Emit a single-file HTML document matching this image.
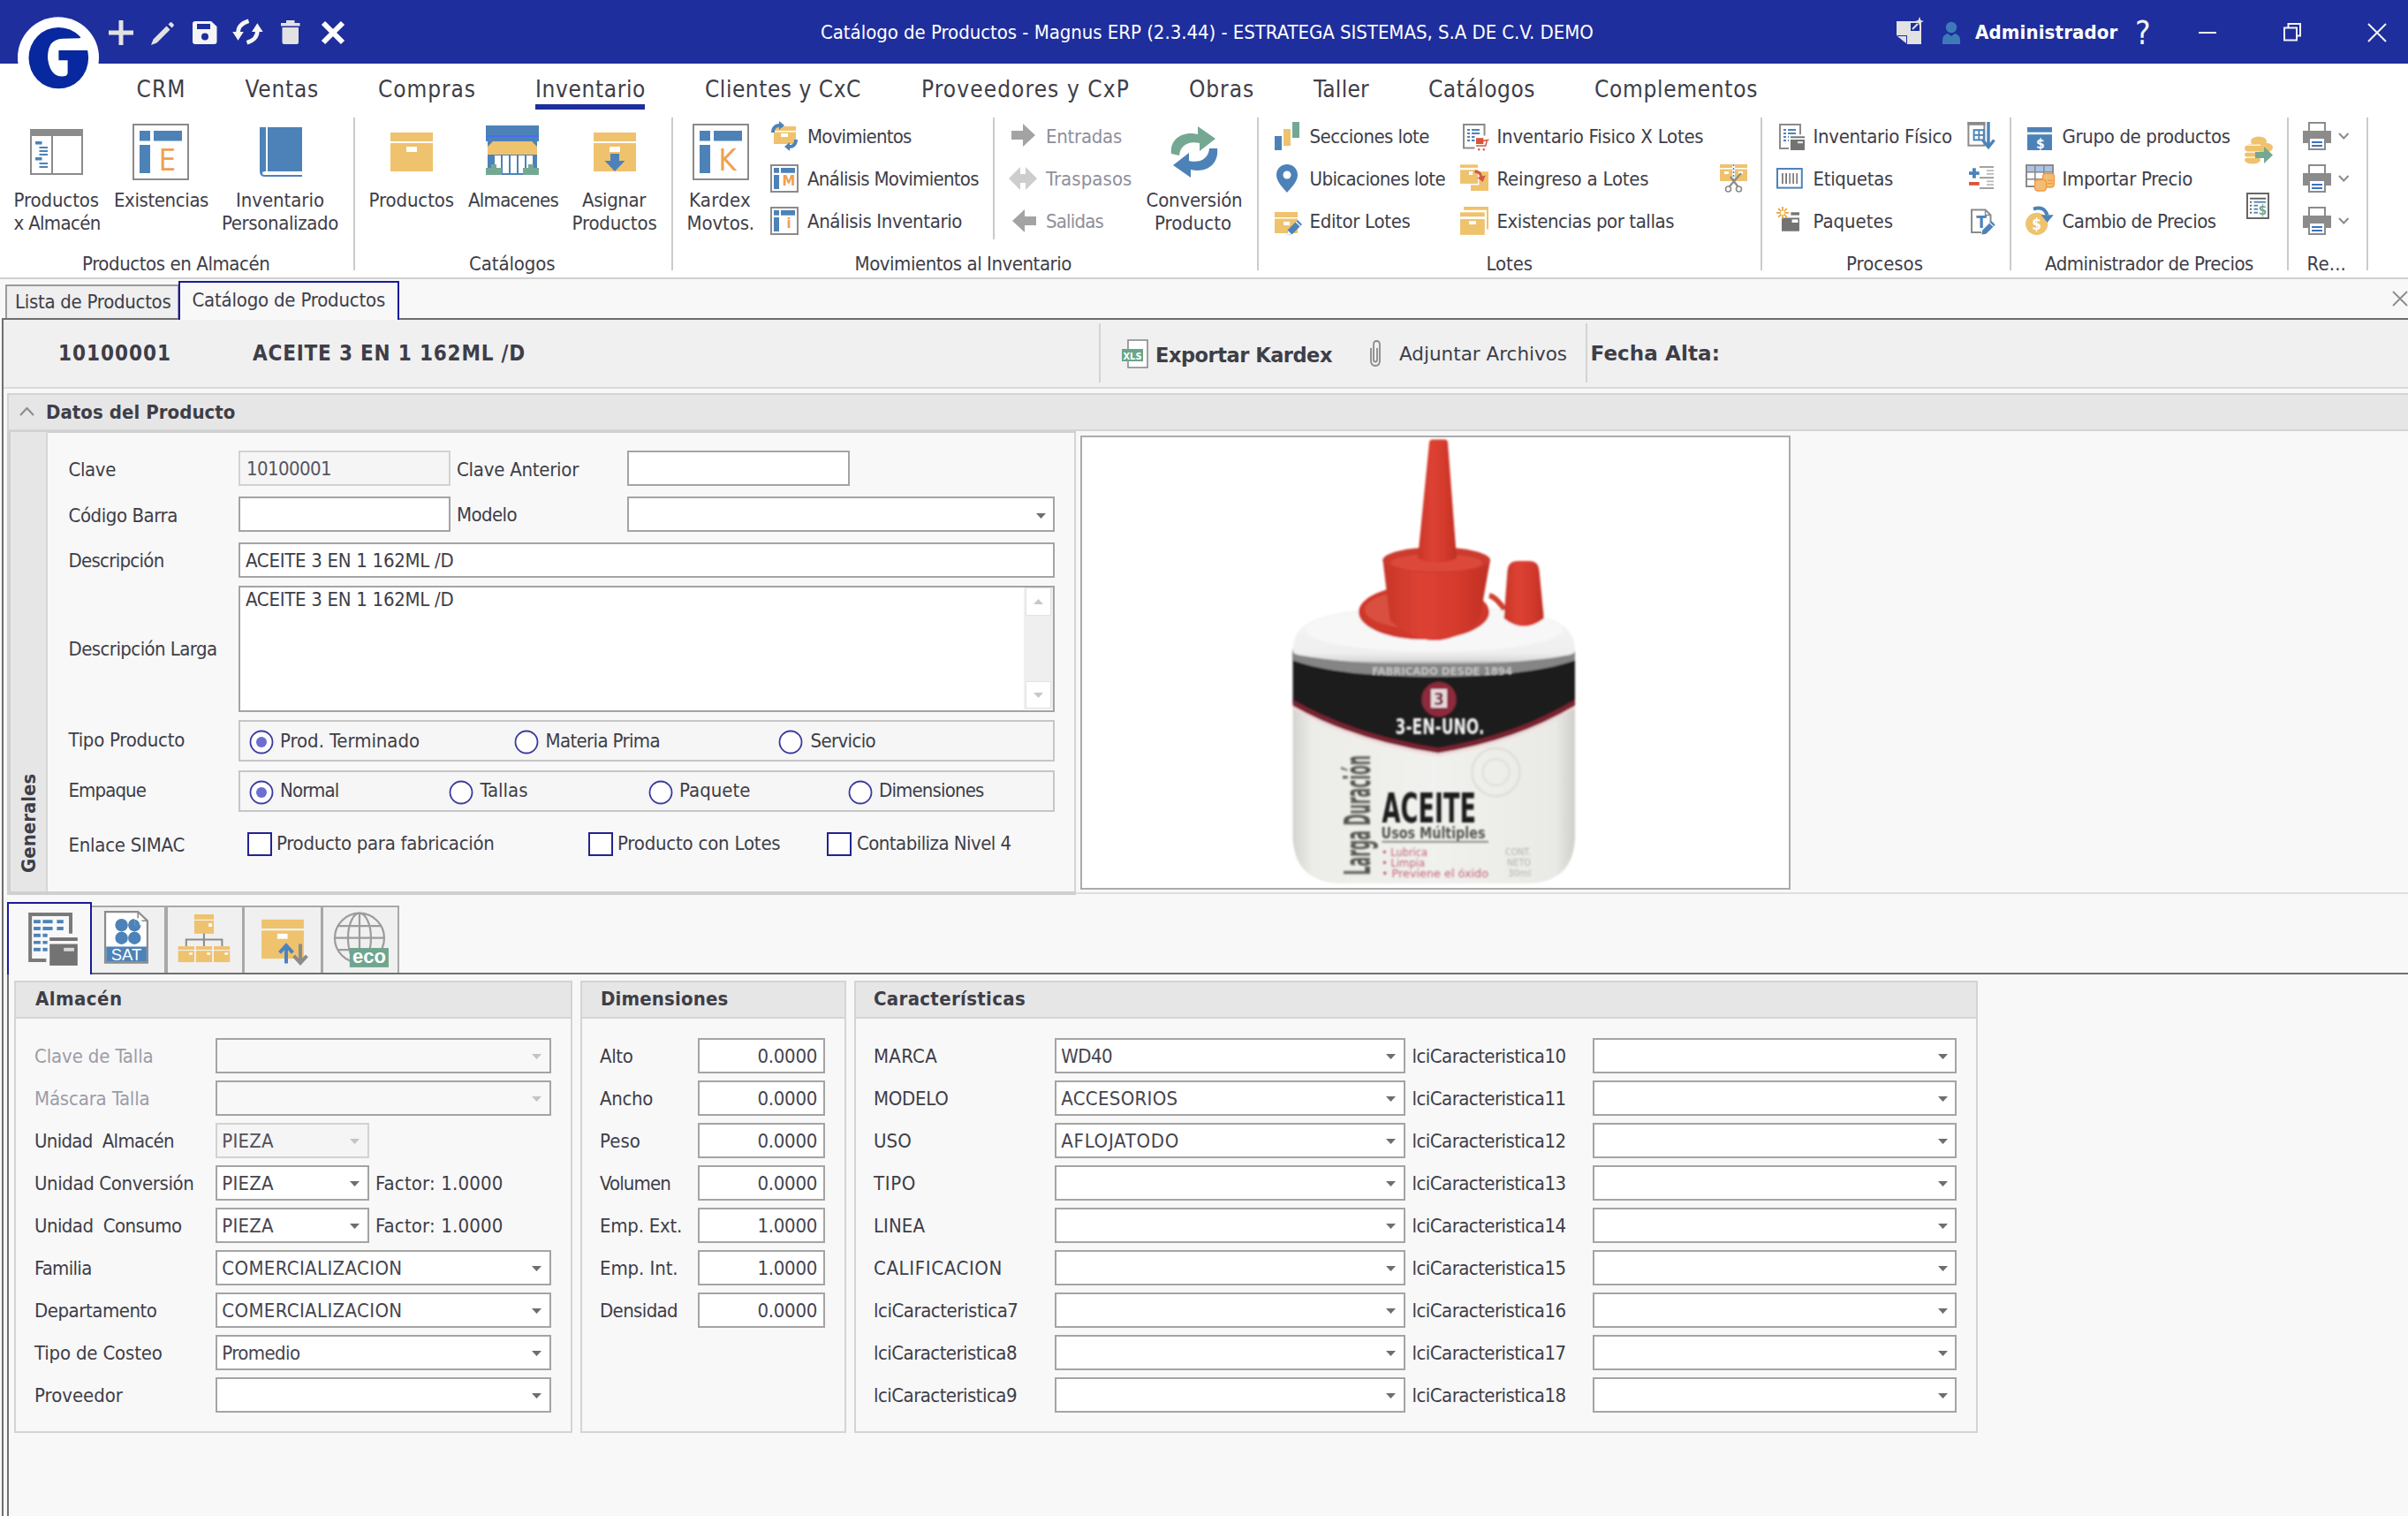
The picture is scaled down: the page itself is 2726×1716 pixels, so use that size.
<!DOCTYPE html><html lang="es"><head><meta charset="utf-8"><title>Catálogo de Productos - Magnus ERP</title><style>

html,body{margin:0;padding:0;}
html{overflow:hidden;width:2726px;height:1716px;}
body{font-stretch:condensed;width:2726px;height:1716px;overflow:hidden;position:relative;background:#f8f8f8;font-family:'DejaVu Sans Condensed','DejaVu Sans','Liberation Sans',sans-serif;color:#3e3e48;}
body>div,body>svg,body>span{position:absolute;box-sizing:border-box;}
.t{white-space:pre;line-height:1;}
svg{overflow:visible}

</style></head><body>
<div style="left:0px;top:0px;width:2726px;height:72px;background:#1e2e9d;"></div>
<div style="left:0px;top:72px;width:2726px;height:242px;background:#ffffff;"></div>
<div style="left:0px;top:314px;width:2726px;height:2px;background:#d0d0d0;"></div>
<svg style="left:0px;top:0px;" width="130" height="130" viewBox="0 0 130 130"><circle cx="66" cy="65.2" r="46" fill="#fff"/><ellipse cx="66.3" cy="65.6" rx="33.8" ry="34.7" fill="#07289e"/><path d="M57.5 50 Q62 44 71 43.7 L90 43.2 L99.5 37.5 L101.5 36.8 L106.5 45 L110 56.9 L66.4 56.9 L66.4 68.2 L76.6 68.2 L76.6 83 Q76 86.6 70 86.6 Q61 86.6 57 77.5 Q53 68 54.3 60 Q55 54 57.5 50 Z" fill="#fff"/></svg>
<svg style="left:123px;top:23px;" width="28" height="28" viewBox="0 0 28 28"><rect x="0" y="11.5" width="28" height="5" fill="#e2e2e2" /><rect x="11.5" y="0" width="5" height="28" fill="#e2e2e2" /></svg>
<svg style="left:170px;top:23.5px;" width="28" height="28" viewBox="0 0 28 28"><path d="M1 27 L3.5 20.5 L18.5 5.5 L22.5 9.5 L7.5 24.5 Z M20.5 3.5 L22.3 1.7 Q23.5 0.5 24.7 1.7 L26.3 3.3 Q27.5 4.5 26.3 5.7 L24.5 7.5 Z" fill="#e2e2e2" /></svg>
<svg style="left:218px;top:24px;" width="28" height="26" viewBox="0 0 28 26"><path d="M3 0 H21 L27.5 6 V23 Q27.5 26 24.5 26 H3 Q0 26 0 23 V3 Q0 0 3 0 Z" fill="#f4f4f4" /><rect x="5" y="3" width="15" height="6" fill="#1e2e9d" /><circle cx="14" cy="17.5" r="4" fill="#1e2e9d"/></svg>
<svg style="left:264px;top:23px;" width="32" height="27" viewBox="0 0 32 27"><path d="M17.5 0.8 Q5 4.5 5.5 15" fill="none" stroke="#f6f6f6" stroke-width="4.6"/><path d="M-0.8 13 H11.8 L5.5 22.8 Z" fill="#f6f6f6" /><path d="M15.5 25.2 Q28 21.5 27.3 11" fill="none" stroke="#f6f6f6" stroke-width="4.6"/><path d="M21 13 H33.6 L27.3 3.2 Z" fill="#f6f6f6" /></svg>
<svg style="left:317.5px;top:22.5px;" width="22" height="27" viewBox="0 0 22 27"><rect x="0" y="3" width="21.5" height="3.5" fill="#e2e2e2" /><rect x="6" y="0" width="9.5" height="3.5" fill="#e2e2e2" /><path d="M1.5 8 H20 V25 Q20 27 18 27 H3.5 Q1.5 27 1.5 25 Z" fill="#e2e2e2" /></svg>
<svg style="left:364px;top:24px;" width="26" height="26" viewBox="0 0 26 26"><path d="M2 2 L24 24 M24 2 L2 24" fill="none" stroke="#ffffff" stroke-width="6"/></svg>
<span class="t" style="top:26px;font-size:22px;color:#ffffff;letter-spacing:-0.04px;left:929px;">Catálogo de Productos - Magnus ERP (2.3.44) - ESTRATEGA SISTEMAS, S.A DE C.V. DEMO</span>
<svg style="left:2147px;top:21px;" width="31" height="30" viewBox="0 0 31 30"><path d="M0 3 H14 V14 H28 V29 H12 L0 19 Z" fill="#e2e2e2" /><path d="M0 19 H12 V29 Z" fill="#1e2e9d" /><path d="M1 20 H11 V28 Z" fill="#e2e2e2" /><rect x="15" y="4" width="12" height="11" fill="none" stroke="#e2e2e2" stroke-width="2"/><path d="M26 -2 L27.5 2 L31 3 L27.5 4.5 L26 8 L24.5 4.5 L21 3 L24.5 2 Z" fill="#e2e2e2" /><path d="M18 12 L24 6" fill="none" stroke="#e2e2e2" stroke-width="2"/></svg>
<svg style="left:2199px;top:24px;" width="20" height="26" viewBox="0 0 20 26"><circle cx="10" cy="7" r="6.2" fill="#3f7ab8"/><path d="M0 26 V22 Q0 15 6 14 L10 17 L14 14 Q20 15 20 22 V26 Z" fill="#3f7ab8" /></svg>
<span class="t" style="top:26px;font-size:22px;color:#ffffff;font-weight:bold;letter-spacing:0.14px;left:2236px;">Administrador</span>
<span class="t" style="top:19px;font-size:37px;color:#f4f4f4;left:2417px;letter-spacing:0;">?</span>
<div style="left:2489px;top:36px;width:20px;height:2px;background:#f4f4f4;"></div>
<svg style="left:2585px;top:26px;" width="20" height="20.5" viewBox="0 0 20 20.5"><rect x="1" y="5.5" width="14" height="14" fill="none" stroke="#f4f4f4" stroke-width="2"/><path d="M5.5 5 V1 H19 V14.5 H15.5" fill="none" stroke="#f4f4f4" stroke-width="2"/></svg>
<svg style="left:2679px;top:24.5px;" width="24" height="24" viewBox="0 0 24 24"><path d="M2 2 L22 22 M22 2 L2 22" fill="none" stroke="#f4f4f4" stroke-width="2"/></svg>
<span class="t" style="top:88px;font-size:26px;letter-spacing:1.07px;left:154.5px;">CRM</span>
<span class="t" style="top:88px;font-size:26px;letter-spacing:0.77px;left:277.5px;">Ventas</span>
<span class="t" style="top:88px;font-size:26px;letter-spacing:0.94px;left:428px;">Compras</span>
<span class="t" style="top:88px;font-size:26px;letter-spacing:0.63px;left:606px;">Inventario</span>
<span class="t" style="top:88px;font-size:26px;letter-spacing:0.53px;left:798px;">Clientes y CxC</span>
<span class="t" style="top:88px;font-size:26px;letter-spacing:1.09px;left:1043px;">Proveedores y CxP</span>
<span class="t" style="top:88px;font-size:26px;letter-spacing:0.92px;left:1346px;">Obras</span>
<span class="t" style="top:88px;font-size:26px;letter-spacing:0.28px;left:1487px;">Taller</span>
<span class="t" style="top:88px;font-size:26px;letter-spacing:0.52px;left:1617px;">Catálogos</span>
<span class="t" style="top:88px;font-size:26px;letter-spacing:0.68px;left:1805px;">Complementos</span>
<div style="left:606px;top:118px;width:124px;height:6px;background:#1e2e9d;"></div>
<div style="left:400px;top:132.5px;width:2px;height:173px;background:#cbcbcb;"></div>
<div style="left:760px;top:132.5px;width:2px;height:173px;background:#cbcbcb;"></div>
<div style="left:1423px;top:132.5px;width:2px;height:173px;background:#cbcbcb;"></div>
<div style="left:1993px;top:132.5px;width:2px;height:173px;background:#cbcbcb;"></div>
<div style="left:2275px;top:132.5px;width:2px;height:173px;background:#cbcbcb;"></div>
<div style="left:2589px;top:132.5px;width:2px;height:173px;background:#cbcbcb;"></div>
<div style="left:2679px;top:132.5px;width:2px;height:173px;background:#cbcbcb;"></div>
<div style="left:1124px;top:132.5px;width:2px;height:138.5px;background:#cbcbcb;"></div>
<span class="t" style="top:288px;font-size:22px;letter-spacing:-0.42px;left:93px;">Productos en Almacén</span>
<span class="t" style="top:288px;font-size:22px;letter-spacing:-0.1px;left:531px;">Catálogos</span>
<span class="t" style="top:288px;font-size:22px;letter-spacing:-0.45px;left:967.5px;">Movimientos al Inventario</span>
<span class="t" style="top:288px;font-size:22px;letter-spacing:-0.1px;left:1682.5px;">Lotes</span>
<span class="t" style="top:288px;font-size:22px;letter-spacing:-0.01px;left:2090px;">Procesos</span>
<span class="t" style="top:288px;font-size:22px;letter-spacing:-0.47px;left:2315px;">Administrador de Precios</span>
<span class="t" style="top:288px;font-size:22px;letter-spacing:0.14px;left:2611.5px;">Re...</span>
<svg style="left:32px;top:140px;" width="64" height="64" viewBox="0 0 64 64"><rect x="3" y="7" width="58" height="50" fill="#fff" stroke="#8b8b8b" stroke-width="2"/><rect x="2" y="6" width="60" height="8" fill="#8b8b8b" /><rect x="26" y="14" width="2" height="43" fill="#8b8b8b" /><rect x="8" y="20" width="7.5" height="3.5" fill="#4d82b8" /><rect x="12.5" y="26" width="9.5" height="2" fill="#4d82b8" /><rect x="12.5" y="30" width="9.5" height="2" fill="#4d82b8" /><rect x="12.5" y="34" width="9.5" height="2" fill="#4d82b8" /><rect x="8" y="38" width="7.5" height="3.5" fill="#4d82b8" /><rect x="12.5" y="44" width="9.5" height="2" fill="#4d82b8" /><rect x="12.5" y="48" width="9.5" height="2" fill="#4d82b8" /></svg>
<span class="t" style="top:216px;font-size:22px;letter-spacing:-0.11px;left:15.5px;">Productos</span>
<span class="t" style="top:242px;font-size:22px;letter-spacing:-0.67px;left:15.5px;">x Almacén</span>
<svg style="left:150px;top:140px;" width="64" height="64" viewBox="0 0 64 64"><rect x="1" y="1" width="62" height="62" fill="#fff" stroke="#8b8b8b" stroke-width="2"/><rect x="8.0" y="8.0" width="12.0" height="11.5" fill="#4d82b8" /><rect x="24.0" y="8.0" width="32.0" height="11.5" fill="#4d82b8" /><rect x="8.0" y="24.0" width="12.0" height="32.0" fill="#4d82b8" /><text x="39.5" y="52.5" font-size="34.0"  text-anchor="middle" fill="#f0a050" font-family="'DejaVu Sans Condensed','DejaVu Sans','Liberation Sans',sans-serif">E</text></svg>
<span class="t" style="top:216px;font-size:22px;letter-spacing:-0.39px;left:129px;">Existencias</span>
<svg style="left:286px;top:140px;" width="64" height="64" viewBox="0 0 64 64"><path d="M8 4 H56 V60 H14 Q8 60 8 54 Z" fill="#4d82b8" /><rect x="15" y="4" width="2" height="50" fill="#fff" /><path d="M14 54 H56 V58 H14 Q11 58 11 56 Q11 54 14 54 Z" fill="#fff" /></svg>
<span class="t" style="top:216px;font-size:22px;letter-spacing:-0.05px;left:267px;">Inventario</span>
<span class="t" style="top:242px;font-size:22px;letter-spacing:-0.37px;left:251px;">Personalizado</span>
<svg style="left:434px;top:140px;" width="64" height="64" viewBox="0 0 64 64"><rect x="8" y="10" width="48" height="44" fill="#efc26e" /><rect x="8" y="20" width="48" height="2" fill="#fff" /><rect x="26" y="26" width="12" height="6" fill="#fff" /></svg>
<span class="t" style="top:216px;font-size:22px;letter-spacing:-0.11px;left:417.5px;">Productos</span>
<svg style="left:548px;top:140px;" width="64" height="64" viewBox="0 0 64 64"><rect x="2" y="2" width="60" height="18" fill="#4d82b8" /><rect x="2" y="13" width="60" height="2" fill="#4a6cf0" /><rect x="4" y="20" width="56" height="36" fill="#4d82b8" /><path d="M10 20 H54 L60 26 V35 H4 V26 Z" fill="#efc26e" /><rect x="12" y="36" width="7" height="20" fill="#fff" /><rect x="21" y="36" width="7" height="20" fill="#fff" /><rect x="30" y="36" width="7" height="20" fill="#fff" /><rect x="39" y="36" width="7" height="20" fill="#fff" /><rect x="48" y="36" width="7" height="20" fill="#fff" /><rect x="10" y="56" width="44" height="2" fill="#4d82b8" /><path d="M2 58 V50 H8 V46 H14 V50 H20 V58 Z" fill="#74a892" /><path d="M44 58 V50 H50 V46 H56 V50 H62 V58 Z" fill="#74a892" /></svg>
<span class="t" style="top:216px;font-size:22px;letter-spacing:-0.73px;left:530px;">Almacenes</span>
<svg style="left:664px;top:140px;" width="64" height="64" viewBox="0 0 64 64"><rect x="8" y="10" width="48" height="44" fill="#efc26e" /><rect x="8" y="20" width="48" height="2" fill="#fff" /><rect x="26" y="26" width="12" height="6" fill="#fff" /><path d="M27 34 H37 V42 H43.5 L32 54 L20.5 42 H27 Z" fill="#4d82b8" /></svg>
<span class="t" style="top:216px;font-size:22px;letter-spacing:-0.39px;left:659px;">Asignar</span>
<span class="t" style="top:242px;font-size:22px;letter-spacing:-0.16px;left:647.5px;">Productos</span>
<svg style="left:784px;top:140px;" width="64" height="64" viewBox="0 0 64 64"><rect x="1" y="1" width="62" height="62" fill="#fff" stroke="#8b8b8b" stroke-width="2"/><rect x="8.0" y="8.0" width="12.0" height="11.5" fill="#4d82b8" /><rect x="24.0" y="8.0" width="32.0" height="11.5" fill="#4d82b8" /><rect x="8.0" y="24.0" width="12.0" height="32.0" fill="#4d82b8" /><text x="39.5" y="52.5" font-size="34.0"  text-anchor="middle" fill="#f0a050" font-family="'DejaVu Sans Condensed','DejaVu Sans','Liberation Sans',sans-serif">K</text></svg>
<span class="t" style="top:216px;font-size:22px;letter-spacing:0.24px;left:780px;">Kardex</span>
<span class="t" style="top:242px;font-size:22px;letter-spacing:-0.12px;left:777.5px;">Movtos.</span>
<svg style="left:1320px;top:140px;" width="64" height="64" viewBox="0 0 64 64"><path d="M6 34 C4 18 18 8 36 12 L36 3 L56 17 L38 31 L38 22 C26 19 16 24 15 36 Z" fill="#74a892" /><path d="M58 28 C60 46 46 56 28 52 L28 61 L8 47 L26 33 L26 42 C38 45 48 40 49 28 Z" fill="#4d82b8" /></svg>
<span class="t" style="top:216px;font-size:22px;letter-spacing:-0.2px;left:1297.5px;">Conversión</span>
<span class="t" style="top:242px;font-size:22px;letter-spacing:-0.02px;left:1307px;">Producto</span>
<svg style="left:872px;top:138px;" width="32" height="32" viewBox="0 0 32 32"><rect x="4" y="5" width="25" height="20" fill="#efc26e" /><rect x="4" y="10" width="25" height="1.5" fill="#fff" /><rect x="12" y="13" width="8" height="4" fill="#fff" /><path d="M1 12 C1 5 6 2 10 2 L10 -1 L16 4 L10 9 L10 6 C7 6 5 8 5 12 Z" fill="#4d82b8" /><path d="M31 20 C31 27 26 30 22 30 L22 33 L16 28 L22 23 L22 26 C25 26 27 24 27 20 Z" fill="#4d82b8" /></svg>
<span class="t" style="top:144px;font-size:22px;letter-spacing:-0.78px;left:914px;">Movimientos</span>
<svg style="left:872px;top:186px;" width="32" height="32" viewBox="0 0 32 32"><rect x="1" y="1" width="30" height="30" fill="#fff" stroke="#8b8b8b" stroke-width="2"/><rect x="4.0" y="4.0" width="6.0" height="5.75" fill="#4d82b8" /><rect x="12.0" y="4.0" width="16.0" height="5.75" fill="#4d82b8" /><rect x="4.0" y="12.0" width="6.0" height="16.0" fill="#4d82b8" /><text x="21" y="24" font-size="16.5" font-weight="bold" text-anchor="middle" fill="#f0a050" font-family="'DejaVu Sans Condensed','DejaVu Sans','Liberation Sans',sans-serif">M</text></svg>
<span class="t" style="top:192px;font-size:22px;letter-spacing:-0.69px;left:914px;">Análisis Movimientos</span>
<svg style="left:872px;top:234px;" width="32" height="32" viewBox="0 0 32 32"><rect x="1" y="1" width="30" height="30" fill="#fff" stroke="#8b8b8b" stroke-width="2"/><rect x="4.0" y="4.0" width="6.0" height="5.75" fill="#4d82b8" /><rect x="12.0" y="4.0" width="16.0" height="5.75" fill="#4d82b8" /><rect x="4.0" y="12.0" width="6.0" height="16.0" fill="#4d82b8" /><text x="21" y="24" font-size="16.5" font-weight="bold" text-anchor="middle" fill="#f0a050" font-family="'DejaVu Sans Condensed','DejaVu Sans','Liberation Sans',sans-serif">i</text></svg>
<span class="t" style="top:240px;font-size:22px;letter-spacing:-0.37px;left:914px;">Análisis Inventario</span>
<svg style="left:1143px;top:137px;" width="32" height="32" viewBox="0 0 32 32"><path d="M2 11 H15 V3 L29 16 L15 29 V21 H2 Z" fill="#a3a3a3" /></svg>
<span class="t" style="top:144px;font-size:22px;color:#8f8f9c;letter-spacing:-0.26px;left:1184px;">Entradas</span>
<svg style="left:1142px;top:186px;" width="32" height="32" viewBox="0 0 32 32"><path d="M0 16 L13 3 V11 H19 V3 L32 16 L19 29 V21 H13 V29 Z" fill="#cdcdcd" /></svg>
<span class="t" style="top:192px;font-size:22px;color:#8f8f9c;letter-spacing:0.07px;left:1184px;">Traspasos</span>
<svg style="left:1143px;top:233.5px;" width="32" height="32" viewBox="0 0 32 32"><path d="M30 11 H17 V3 L3 16 L17 29 V21 H30 Z" fill="#a3a3a3" /></svg>
<span class="t" style="top:240px;font-size:22px;color:#8f8f9c;letter-spacing:-0.82px;left:1184px;">Salidas</span>
<svg style="left:1443px;top:138px;" width="32" height="32" viewBox="0 0 32 32"><rect x="0" y="16" width="8" height="16" fill="#4d82b8" /><rect x="10" y="8" width="8" height="19" fill="#efc26e" /><rect x="20" y="0" width="8" height="18" fill="#74a892" /></svg>
<span class="t" style="top:144px;font-size:22px;letter-spacing:-0.54px;left:1482.5px;">Secciones lote</span>
<svg style="left:1441px;top:186px;" width="32" height="32" viewBox="0 0 32 32"><path d="M16 0 C23 0 28 5 28 12 C28 20 20 27 16 32 C12 27 4 20 4 12 C4 5 9 0 16 0 Z" fill="#4d82b8" /><circle cx="16" cy="12" r="4.5" fill="#fff"/></svg>
<span class="t" style="top:192px;font-size:22px;letter-spacing:-0.59px;left:1482.5px;">Ubicaciones lote</span>
<svg style="left:1443px;top:234px;" width="32" height="32" viewBox="0 0 32 32"><rect x="0" y="6" width="26" height="24" fill="#efc26e" /><rect x="0" y="12" width="26" height="1.5" fill="#fff" /><rect x="10" y="17" width="7" height="4" fill="#fff" /><path d="M14 32 L15 26 L26 15 L31 20 L20 31 Z" fill="#4d82b8" /><path d="M14 32 L15 27 L19 31 Z" fill="#fff" /><path d="M24 17 L29 22" fill="none" stroke="#fff" stroke-width="1.2"/></svg>
<span class="t" style="top:240px;font-size:22px;letter-spacing:-0.32px;left:1482.5px;">Editor Lotes</span>
<svg style="left:1656px;top:140px;" width="32" height="32" viewBox="0 0 32 32"><rect x="1" y="1" width="23.5" height="26.5" fill="#fff" stroke="#8b8b8b" stroke-width="2"/><rect x="5" y="6" width="3" height="2" fill="#4d82b8" /><rect x="10" y="6" width="9" height="2" fill="#4d82b8" /><rect x="5" y="10" width="3" height="2" fill="#4d82b8" /><rect x="10" y="10" width="9" height="2" fill="#4d82b8" /><rect x="5" y="14" width="3" height="2" fill="#4d82b8" /><rect x="10" y="14" width="9" height="2" fill="#4d82b8" /><rect x="5" y="18" width="3" height="2" fill="#4d82b8" /><rect x="10" y="18" width="9" height="2" fill="#4d82b8" /><rect x="13.5" y="13.5" width="16" height="18" fill="#fff" /><rect x="15" y="16.2" width="8.4" height="6.8" fill="#d8553b" /><path d="M23 19.5 L29.5 18.2 M15 24.9 H25.8 L27.2 19.5" fill="none" stroke="#d8553b" stroke-width="1.5"/><circle cx="18.2" cy="29.3" r="1.2" fill="#d8553b"/><circle cx="23.8" cy="29.3" r="1.2" fill="#d8553b"/></svg>
<span class="t" style="top:144px;font-size:22px;letter-spacing:-0.24px;left:1694.5px;">Inventario Fisico X Lotes</span>
<svg style="left:1653px;top:186px;" width="32" height="32" viewBox="0 0 32 32"><rect x="12" y="8.2" width="20" height="21.8" fill="#efc26e" /><rect x="0" y="0" width="21.4" height="23.4" fill="#fff" /><rect x="0" y="0.3" width="20" height="3.6" fill="#efc26e" /><rect x="0" y="6.3" width="20" height="15.6" fill="#efc26e" /><rect x="10" y="8.2" width="4.2" height="3.8" fill="#fff" /><path d="M16.5 6.5 C22 6.5 24.5 9.5 25 13.5 L28.8 12.5 L25.6 20 L19.3 15 L22.4 14.2 C22 11.5 20 9.8 16.5 9.8 Z" fill="#d8553b" /></svg>
<span class="t" style="top:192px;font-size:22px;letter-spacing:-0.21px;left:1694.5px;">Reingreso a Lotes</span>
<svg style="left:1653px;top:234px;" width="32" height="32" viewBox="0 0 32 32"><path d="M4 0 H32 V25.6 H30 V3.8 H4 Z" fill="#efc26e" /><rect x="0" y="6.3" width="27.8" height="4.9" fill="#efc26e" /><rect x="0" y="14" width="27.8" height="17.9" fill="#efc26e" /><rect x="10" y="16.2" width="8" height="3.8" fill="#fff" /></svg>
<span class="t" style="top:240px;font-size:22px;letter-spacing:-0.43px;left:1694.5px;">Existencias por tallas</span>
<svg style="left:1947px;top:186px;" width="32" height="32" viewBox="0 0 32 32"><rect x="0" y="0" width="14" height="19" fill="#efc26e" /><rect x="17" y="0" width="14" height="19" fill="#efc26e" /><rect x="0" y="4" width="31" height="1.5" fill="#fff" /><rect x="5" y="8" width="5" height="3" fill="#fff" /><rect x="21" y="8" width="5" height="3" fill="#fff" /><path d="M15.5 0 V20" fill="none" stroke="#4d82b8" stroke-width="1.6" stroke-dasharray="2 2"/><path d="M10 26 L24 10 M21 26 L12 14" fill="none" stroke="#8b8b8b" stroke-width="2.2"/><circle cx="9.5" cy="28" r="3" fill="#fff" stroke="#8b8b8b" stroke-width="1.6"/><circle cx="21.5" cy="28" r="3" fill="#fff" stroke="#8b8b8b" stroke-width="1.6"/></svg>
<svg style="left:2014px;top:140px;" width="32" height="32" viewBox="0 0 32 32"><rect x="1" y="1" width="23" height="27" fill="#fff" stroke="#8b8b8b" stroke-width="2"/><rect x="5" y="6" width="3" height="2" fill="#4d82b8" /><rect x="10" y="6" width="9" height="2" fill="#4d82b8" /><rect x="5" y="10" width="3" height="2" fill="#4d82b8" /><rect x="10" y="10" width="9" height="2" fill="#4d82b8" /><rect x="5" y="14" width="3" height="2" fill="#4d82b8" /><rect x="10" y="14" width="9" height="2" fill="#4d82b8" /><rect x="5" y="18" width="3" height="2" fill="#4d82b8" /><rect x="10" y="18" width="9" height="2" fill="#4d82b8" /><rect x="11" y="12.3" width="21" height="19" fill="#fff" /><rect x="13" y="14.3" width="16" height="2" fill="#737373" /><rect x="13" y="18" width="16" height="12" fill="#737373" /><rect x="21" y="20" width="6" height="2.2" fill="#e4e4e4" /></svg>
<span class="t" style="top:144px;font-size:22px;letter-spacing:-0.3px;left:2052.5px;">Inventario Físico</span>
<svg style="left:2011px;top:190px;" width="32" height="32" viewBox="0 0 32 32"><rect x="1" y="1" width="27.8" height="21.6" fill="#fff" stroke="#4d82b8" stroke-width="2"/><rect x="6.1" y="6" width="1.7" height="12" fill="#737373" /><rect x="10.2" y="6" width="1.8" height="12" fill="#737373" /><rect x="14.4" y="6" width="1.5" height="12" fill="#737373" /><rect x="18.3" y="6" width="1.6" height="12" fill="#737373" /><rect x="22.4" y="6" width="1.6" height="12" fill="#737373" /></svg>
<span class="t" style="top:192px;font-size:22px;letter-spacing:-0.31px;left:2052.5px;">Etiquetas</span>
<svg style="left:2011px;top:234px;" width="32" height="32" viewBox="0 0 32 32"><rect x="16.4" y="6.3" width="9.6" height="3.3" fill="#737373" /><rect x="6" y="12.5" width="20" height="15.2" fill="#737373" /><rect x="17.6" y="14.4" width="6.9" height="3.6" fill="#fff" /><path d="M7 0 V13.8 M0.1 6.9 H13.9 M2.1 2 L11.9 11.8 M11.9 2 L2.1 11.8" fill="none" stroke="#e8a33c" stroke-width="1.7"/><circle cx="7" cy="6.9" r="2.3" fill="#fff"/></svg>
<span class="t" style="top:240px;font-size:22px;letter-spacing:-0.02px;left:2052.5px;">Paquetes</span>
<svg style="left:2227px;top:138px;" width="32" height="32" viewBox="0 0 32 32"><rect x="1.4" y="1" width="18" height="25.7" fill="#fff" stroke="#8b8b8b" stroke-width="2"/><rect x="0.4" y="0" width="20" height="3.8" fill="#8b8b8b" /><rect x="7.6" y="9.2" width="11.2" height="11.2" fill="#fff" stroke="#4d82b8" stroke-width="2"/><rect x="12.4" y="9" width="1.8" height="12" fill="#4d82b8" /><rect x="7" y="14" width="12.5" height="1.8" fill="#4d82b8" /><path d="M24 0 V27.5 M17.5 20.5 L24 28.5 L30.5 20.5" fill="none" stroke="#4d82b8" stroke-width="3.4"/></svg>
<svg style="left:2229px;top:188px;" width="32" height="32" viewBox="0 0 32 32"><rect x="0" y="6.2" width="11.7" height="3.7" fill="#4d82b8" /><rect x="4" y="2.3" width="3.8" height="11.4" fill="#4d82b8" /><rect x="0" y="18" width="11.7" height="3.8" fill="#d8553b" /><rect x="12" y="0.2" width="16" height="1.6" fill="#8b8b8b" /><rect x="20" y="4.3" width="8" height="1.6" fill="#b5b5b5" /><rect x="20" y="8.1" width="8" height="1.6" fill="#b5b5b5" /><rect x="12" y="12.4" width="16" height="1.6" fill="#8b8b8b" /><rect x="20" y="16.5" width="8" height="1.6" fill="#b5b5b5" /><rect x="20" y="20.2" width="8" height="1.6" fill="#b5b5b5" /><rect x="12" y="24.2" width="16" height="1.6" fill="#8b8b8b" /></svg>
<svg style="left:2231px;top:236px;" width="32" height="32" viewBox="0 0 32 32"><path d="M1 1.5 H16.5 L22.5 7.5 V27 H1 Z" fill="#fff" stroke="#8b8b8b" stroke-width="2"/><path d="M16.5 1.5 V7.5 H22.5" fill="none" stroke="#8b8b8b" stroke-width="1.4"/><rect x="12" y="20" width="13" height="9" fill="#fff" /><text x="11.9" y="21.7" font-size="18.8" font-weight="bold" text-anchor="middle" fill="#4d82b8" font-family="'DejaVu Sans Condensed','DejaVu Sans','Liberation Sans',sans-serif">T</text><path d="M12.3 29.4 L13.3 24.6 L23.6 14.3 L27.7 18.4 L17.4 28.7 Z" fill="#4d82b8" /><path d="M21.6 16.3 L25.7 20.4" fill="none" stroke="#fff" stroke-width="1.1"/></svg>
<svg style="left:2295px;top:142px;" width="32" height="32" viewBox="0 0 32 32"><rect x="0" y="2" width="28" height="26" fill="#4d82b8" /><rect x="0" y="7.7" width="28" height="2.5" fill="#fff" /><text x="14.8" y="26.2" font-size="15.5" font-weight="bold" text-anchor="middle" fill="#fff" font-family="'DejaVu Sans Condensed','DejaVu Sans','Liberation Sans',sans-serif">$</text></svg>
<span class="t" style="top:144px;font-size:22px;letter-spacing:-0.35px;left:2334.5px;">Grupo de productos</span>
<svg style="left:2293px;top:186px;" width="32" height="32" viewBox="0 0 32 32"><rect x="1" y="1" width="30" height="24" fill="#fff" stroke="#8b8b8b" stroke-width="2"/><rect x="2" y="2" width="28" height="6" fill="#a9c4e4" /><rect x="10" y="1" width="1.6" height="24" fill="#8b8b8b" /><rect x="20" y="1" width="1.6" height="24" fill="#8b8b8b" /><rect x="1" y="8" width="30" height="1.6" fill="#8b8b8b" /><rect x="1" y="16" width="30" height="1.6" fill="#8b8b8b" /><rect x="19.5" y="10.5" width="13" height="15.5" rx="3.5" fill="#f3be74" stroke="#f09a42" stroke-width="1.4"/><rect x="10.5" y="17.5" width="13" height="12.5" rx="3.5" fill="#f3be74" stroke="#f09a42" stroke-width="1.4"/><rect x="25" y="17.5" width="6" height="1.3" fill="#f09a42" /><rect x="25" y="21" width="6" height="1.3" fill="#f09a42" /></svg>
<span class="t" style="top:192px;font-size:22px;letter-spacing:-0.31px;left:2334.5px;">Importar Precio</span>
<svg style="left:2293px;top:234px;" width="32" height="32" viewBox="0 0 32 32"><circle cx="12.7" cy="19.4" r="12.6" fill="#efc26e"/><text x="12.5" y="25.6" font-size="17" font-weight="bold" text-anchor="middle" fill="#fff" font-family="'DejaVu Sans Condensed','DejaVu Sans','Liberation Sans',sans-serif">$</text><path d="M9 2.6 Q21 -1.5 24.6 9.5" fill="none" stroke="#4d82b8" stroke-width="4"/><path d="M17.6 9.3 H31.8 L24.7 17.8 Z" fill="#4d82b8" /></svg>
<span class="t" style="top:240px;font-size:22px;letter-spacing:-0.52px;left:2334.5px;">Cambio de Precios</span>
<svg style="left:2541px;top:154px;" width="32" height="32" viewBox="0 0 32 32"><ellipse cx="16" cy="6" rx="9" ry="5.5" fill="#efc26e"/><ellipse cx="10" cy="14" rx="10" ry="5.5" fill="#efc26e"/><ellipse cx="23" cy="13" rx="9" ry="5.5" fill="#efc26e"/><ellipse cx="9" cy="21" rx="9" ry="4.5" fill="#efc26e"/><ellipse cx="9" cy="27" rx="9" ry="4.5" fill="#efc26e"/><rect x="1" y="17.5" width="16" height="1.2" fill="#fff" /><rect x="1" y="23.5" width="16" height="1.2" fill="#fff" /><rect x="2" y="9.6" width="16" height="1.2" fill="#fff" /><path d="M12 18 H22 V12 L32 21.5 L22 31 V25 H12 Z" fill="#74a892" /></svg>
<svg style="left:2543px;top:218px;" width="26" height="30" viewBox="0 0 26 30"><rect x="1" y="1" width="24" height="28" fill="#fff" stroke="#666" stroke-width="2"/><rect x="4" y="5.8" width="18" height="1.8" fill="#5a5a5a" /><rect x="8.5" y="9.8" width="13.5" height="1.8" fill="#4d82b8" /><rect x="4" y="9.8" width="2" height="1.8" fill="#5a5a5a" /><rect x="4" y="13.8" width="2" height="1.8" fill="#5a5a5a" /><rect x="4" y="17.8" width="2" height="1.8" fill="#5a5a5a" /><rect x="4" y="21.8" width="2" height="1.8" fill="#5a5a5a" /><rect x="8.5" y="13.8" width="4.5" height="1.8" fill="#4d82b8" /><rect x="8.5" y="17.8" width="4.5" height="1.8" fill="#4d82b8" /><rect x="8.5" y="21.8" width="4.5" height="1.8" fill="#4d82b8" /><text x="18.3" y="25.3" font-size="15.5" font-weight="bold" text-anchor="middle" fill="#74a892" font-family="'DejaVu Sans Condensed','DejaVu Sans','Liberation Sans',sans-serif">$</text></svg>
<svg style="left:2607px;top:138px;" width="32" height="32" viewBox="0 0 32 32"><rect x="7" y="1" width="18" height="10" fill="#fff" stroke="#8b8b8b" stroke-width="2"/><path d="M0 10 H32 V24 H26 V18 H6 V24 H0 Z" fill="#8b8b8b" /><rect x="7" y="18" width="18" height="13" fill="#fff" stroke="#8b8b8b" stroke-width="2"/><rect x="10" y="22" width="12" height="2" fill="#3c72c0" /><rect x="10" y="26" width="12" height="2" fill="#3c72c0" /></svg>
<svg style="left:2646.5px;top:150px;" width="12.5" height="7.5" viewBox="0 0 12.5 7.5"><path d="M1 1 L6.25 6.5 L11.5 1" fill="none" stroke="#8b8b8b" stroke-width="2"/></svg>
<svg style="left:2607px;top:186px;" width="32" height="32" viewBox="0 0 32 32"><rect x="7" y="1" width="18" height="10" fill="#fff" stroke="#8b8b8b" stroke-width="2"/><path d="M0 10 H32 V24 H26 V18 H6 V24 H0 Z" fill="#8b8b8b" /><rect x="7" y="18" width="18" height="13" fill="#fff" stroke="#8b8b8b" stroke-width="2"/><rect x="10" y="22" width="12" height="2" fill="#3c72c0" /><rect x="10" y="26" width="12" height="2" fill="#3c72c0" /></svg>
<svg style="left:2646.5px;top:198px;" width="12.5" height="7.5" viewBox="0 0 12.5 7.5"><path d="M1 1 L6.25 6.5 L11.5 1" fill="none" stroke="#8b8b8b" stroke-width="2"/></svg>
<svg style="left:2607px;top:234px;" width="32" height="32" viewBox="0 0 32 32"><rect x="7" y="1" width="18" height="10" fill="#fff" stroke="#8b8b8b" stroke-width="2"/><path d="M0 10 H32 V24 H26 V18 H6 V24 H0 Z" fill="#8b8b8b" /><rect x="7" y="18" width="18" height="13" fill="#fff" stroke="#8b8b8b" stroke-width="2"/><rect x="10" y="22" width="12" height="2" fill="#3c72c0" /><rect x="10" y="26" width="12" height="2" fill="#3c72c0" /></svg>
<svg style="left:2646.5px;top:246px;" width="12.5" height="7.5" viewBox="0 0 12.5 7.5"><path d="M1 1 L6.25 6.5 L11.5 1" fill="none" stroke="#8b8b8b" stroke-width="2"/></svg>
<div style="left:6px;top:322.3px;width:197px;height:39.7px;background:#efefef;border:2px solid #9a9a9a;"></div>
<span class="t" style="top:331px;font-size:22px;letter-spacing:-0.28px;left:17px;">Lista de Productos</span>
<div style="left:2px;top:360px;width:2724px;height:2px;background:#6e6e6e;"></div>
<div style="left:2px;top:360px;width:2.1px;height:1356px;background:#6e6e6e;"></div>
<div style="left:8px;top:1103px;width:2.1px;height:613px;background:#707070;"></div>
<div style="left:202px;top:318px;width:249.5px;height:45px;background:#f8f8f8;border:2px solid #1a1a9a;border-bottom:none;"></div>
<span class="t" style="top:329px;font-size:22px;letter-spacing:-0.21px;left:217.5px;">Catálogo de Productos</span>
<svg style="left:2707px;top:328px;" width="19" height="20" viewBox="0 0 19 20"><path d="M2 2 L18 18 M18 2 L2 18" fill="none" stroke="#8b8b8b" stroke-width="1.8"/></svg>
<div style="left:3.8px;top:362px;width:2722.2px;height:76px;background:#f0f0f0;"></div>
<div style="left:3.8px;top:438px;width:2722.2px;height:2px;background:#dadada;"></div>
<span class="t" style="top:388px;font-size:24px;font-weight:bold;letter-spacing:0.98px;left:66px;">10100001</span>
<span class="t" style="top:388px;font-size:24px;font-weight:bold;letter-spacing:0.8px;left:286px;">ACEITE 3 EN 1 162ML /D</span>
<div style="left:1244.3px;top:366px;width:1.4px;height:67px;background:#d4d4d4;"></div>
<div style="left:1795.3px;top:366px;width:1.4px;height:67px;background:#d4d4d4;"></div>
<svg style="left:1270px;top:383.5px;" width="30" height="34" viewBox="0 0 30 34"><rect x="7" y="1" width="22" height="31" fill="#fff" stroke="#8b8b8b" stroke-width="1.6"/><rect x="0" y="11" width="24" height="14" fill="#6aa589" /><text x="12" y="22.5" font-size="11" font-weight="bold" text-anchor="middle" fill="#fff" font-family="'DejaVu Sans Condensed','Liberation Sans',sans-serif">XLS</text></svg>
<span class="t" style="top:391px;font-size:22.5px;font-weight:bold;font-family:'DejaVu Sans','Liberation Sans',sans-serif;font-stretch:normal;letter-spacing:-0.47px;left:1308px;">Exportar Kardex</span>
<svg style="left:1549px;top:384px;" width="16" height="32" viewBox="0 0 16 32"><path d="M3 10 V24 Q3 30 8 30 Q13 30 13 24 V6 Q13 2 9.5 2 Q6 2 6 6 V23 Q6 25.5 8 25.5 Q10 25.5 10 23 V10" fill="none" stroke="#8b8b8b" stroke-width="1.8"/></svg>
<span class="t" style="top:390px;font-size:21.5px;font-family:'DejaVu Sans','Liberation Sans',sans-serif;font-stretch:normal;left:1584px;">Adjuntar Archivos</span>
<span class="t" style="top:389px;font-size:23px;font-weight:bold;font-family:'DejaVu Sans','Liberation Sans',sans-serif;font-stretch:normal;letter-spacing:0.11px;left:1800.5px;">Fecha Alta:</span>
<div style="left:8px;top:444.5px;width:2718px;height:43.5px;background:#e6e6e6;border:2px solid #d4d4d4;border-right:none;"></div>
<svg style="left:22px;top:460px;" width="17" height="11" viewBox="0 0 17 11"><path d="M1 10 L8.5 2 L16 10" fill="none" stroke="#8b8b8b" stroke-width="2"/></svg>
<span class="t" style="top:456px;font-size:22px;font-weight:bold;letter-spacing:0.04px;left:52px;">Datos del Producto</span>
<div style="left:8px;top:486px;width:1209.5px;height:526px;background:#f8f8f8;border:2px solid #d4d4d4;"></div>
<div style="left:8px;top:488px;width:1210px;height:2px;background:#d0d0d0;"></div>
<div style="left:8px;top:489px;width:4px;height:521px;background:#cfcfcf;"></div>
<div style="left:12px;top:489px;width:40.3px;height:519.6px;background:#e6e6e6;"></div>
<div style="left:52.3px;top:489px;width:1.7px;height:519.6px;background:#d6d6d6;"></div>
<div style="left:8px;top:1008.6px;width:1210px;height:4px;background:#cfcfcf;"></div>
<div style="left:1217.5px;top:1010px;width:1508.5px;height:2px;background:#dedede;"></div>
<span class="t" style="top:970px;font-size:22px;font-weight:bold;left:39.5px;transform-origin:0 18px;transform:rotate(-90deg);letter-spacing:0px;">Generales</span>
<span class="t" style="top:521px;font-size:22px;letter-spacing:-0.37px;left:77.5px;">Clave</span>
<div style="left:270px;top:510px;width:240px;height:39.5px;background:#f5f5f5;border:2px solid #d2d2d2;"></div>
<span class="t" style="top:520px;font-size:22px;color:#55555f;letter-spacing:-0.59px;left:279px;">10100001</span>
<span class="t" style="top:521px;font-size:22px;letter-spacing:-0.25px;left:517px;">Clave Anterior</span>
<div style="left:710px;top:510px;width:251.5px;height:39.5px;background:#ffffff;border:2px solid #a4a4a4;"></div>
<span class="t" style="top:573px;font-size:22px;letter-spacing:-0.43px;left:77.5px;">Código Barra</span>
<div style="left:270px;top:562px;width:240px;height:40px;background:#ffffff;border:2px solid #a4a4a4;"></div>
<span class="t" style="top:572px;font-size:22px;letter-spacing:-0.59px;left:517px;">Modelo</span>
<div style="left:710px;top:562px;width:484px;height:40px;background:#ffffff;border:2px solid #a4a4a4;"></div>
<svg style="left:1172.5px;top:580.5px;" width="11" height="6" viewBox="0 0 11 6"><path d="M0 0 H11 L5.5 6 Z" fill="#6e6e6e" /></svg>
<span class="t" style="top:624px;font-size:22px;letter-spacing:-0.71px;left:77.5px;">Descripción</span>
<div style="left:270px;top:614px;width:924px;height:40px;background:#ffffff;border:2px solid #a4a4a4;"></div>
<span class="t" style="top:624px;font-size:22px;letter-spacing:-0.28px;left:278px;">ACEITE 3 EN 1 162ML /D</span>
<span class="t" style="top:724px;font-size:22px;letter-spacing:-0.57px;left:77.5px;">Descripción Larga</span>
<div style="left:270px;top:662.5px;width:924px;height:143.5px;background:#ffffff;border:2px solid #a4a4a4;"></div>
<span class="t" style="top:668px;font-size:22px;letter-spacing:-0.28px;left:278px;">ACEITE 3 EN 1 162ML /D</span>
<div style="left:1159px;top:665px;width:33px;height:138px;background:#efefef;"></div>
<div style="left:1161px;top:664.5px;width:28.5px;height:32px;background:#ffffff;border:1.5px solid #e2e2e2;"></div>
<div style="left:1161px;top:771px;width:28.5px;height:30.5px;background:#ffffff;border:1.5px solid #e2e2e2;"></div>
<svg style="left:1169.5px;top:678px;" width="11" height="6" viewBox="0 0 11 6"><path d="M0 6 H11 L5.5 0 Z" fill="#c8c8c8" /></svg>
<svg style="left:1169.5px;top:784px;" width="11" height="6" viewBox="0 0 11 6"><path d="M0 0 H11 L5.5 6 Z" fill="#c8c8c8" /></svg>
<span class="t" style="top:827px;font-size:22px;letter-spacing:-0.27px;left:77.5px;">Tipo Producto</span>
<div style="left:270px;top:815px;width:924px;height:47px;background:#f6f6f6;border:2px solid #c6c6c6;"></div>
<svg style="left:282px;top:826px;" width="28" height="28" viewBox="0 0 28 28"><circle cx="14" cy="14" r="12.5" fill="#fff" stroke="#3b3b9e" stroke-width="1.8"/><circle cx="14" cy="14" r="6" fill="#6a6fd0"/></svg>
<span class="t" style="top:828px;font-size:22px;letter-spacing:-0.06px;left:317px;">Prod. Terminado</span>
<svg style="left:582px;top:826px;" width="28" height="28" viewBox="0 0 28 28"><circle cx="14" cy="14" r="12.5" fill="#fff" stroke="#3b3b9e" stroke-width="1.8"/></svg>
<span class="t" style="top:828px;font-size:22px;letter-spacing:-0.64px;left:617.5px;">Materia Prima</span>
<svg style="left:881px;top:826px;" width="28" height="28" viewBox="0 0 28 28"><circle cx="14" cy="14" r="12.5" fill="#fff" stroke="#3b3b9e" stroke-width="1.8"/></svg>
<span class="t" style="top:828px;font-size:22px;letter-spacing:-0.64px;left:917.5px;">Servicio</span>
<span class="t" style="top:884px;font-size:22px;letter-spacing:-0.9px;left:77.5px;">Empaque</span>
<div style="left:270px;top:872px;width:924px;height:47px;background:#f6f6f6;border:2px solid #c6c6c6;"></div>
<svg style="left:282px;top:883px;" width="28" height="28" viewBox="0 0 28 28"><circle cx="14" cy="14" r="12.5" fill="#fff" stroke="#3b3b9e" stroke-width="1.8"/><circle cx="14" cy="14" r="6" fill="#6a6fd0"/></svg>
<span class="t" style="top:884px;font-size:22px;letter-spacing:-0.85px;left:317px;">Normal</span>
<svg style="left:508px;top:883px;" width="28" height="28" viewBox="0 0 28 28"><circle cx="14" cy="14" r="12.5" fill="#fff" stroke="#3b3b9e" stroke-width="1.8"/></svg>
<span class="t" style="top:884px;font-size:22px;left:543.5px;">Tallas</span>
<svg style="left:733.5px;top:883px;" width="28" height="28" viewBox="0 0 28 28"><circle cx="14" cy="14" r="12.5" fill="#fff" stroke="#3b3b9e" stroke-width="1.8"/></svg>
<span class="t" style="top:884px;font-size:22px;letter-spacing:0.03px;left:769px;">Paquete</span>
<svg style="left:959.5px;top:883px;" width="28" height="28" viewBox="0 0 28 28"><circle cx="14" cy="14" r="12.5" fill="#fff" stroke="#3b3b9e" stroke-width="1.8"/></svg>
<span class="t" style="top:884px;font-size:22px;letter-spacing:-0.84px;left:995px;">Dimensiones</span>
<span class="t" style="top:946px;font-size:22px;letter-spacing:-0.25px;left:77.5px;">Enlace SIMAC</span>
<div style="left:280px;top:941.5px;width:27.5px;height:27px;background:#ffffff;border:2px solid #23238e;"></div>
<span class="t" style="top:944px;font-size:22px;letter-spacing:-0.3px;left:313px;">Producto para fabricación</span>
<div style="left:666px;top:941.5px;width:27.5px;height:27px;background:#ffffff;border:2px solid #23238e;"></div>
<span class="t" style="top:944px;font-size:22px;letter-spacing:-0.21px;left:699px;">Producto con Lotes</span>
<div style="left:936px;top:941.5px;width:27.5px;height:27px;background:#ffffff;border:2px solid #23238e;"></div>
<span class="t" style="top:944px;font-size:22px;letter-spacing:-0.54px;left:970px;">Contabiliza Nivel 4</span>
<div style="left:1222.5px;top:492.5px;width:804.5px;height:514.5px;background:#ffffff;border:2px solid #ababab;"></div>
<svg style="left:1224px;top:494px;" width="801" height="511" viewBox="1224 494 801 511">
<defs>
<linearGradient id="bd" x1="0" x2="1" y1="0" y2="0"><stop offset="0" stop-color="#d4d4d0"/><stop offset="0.07" stop-color="#ecece8"/><stop offset="0.5" stop-color="#f1f1ee"/><stop offset="0.93" stop-color="#e9e9e5"/><stop offset="1" stop-color="#cfcfcb"/></linearGradient>
<linearGradient id="sh" x1="0" x2="0" y1="0" y2="1"><stop offset="0" stop-color="#f6f6f6"/><stop offset="0.8" stop-color="#efefef"/><stop offset="0.93" stop-color="#dadada"/><stop offset="1" stop-color="#8a8a8a"/></linearGradient>
<linearGradient id="rd" x1="0" x2="1" y1="0" y2="0"><stop offset="0" stop-color="#c83528"/><stop offset="0.35" stop-color="#dd4233"/><stop offset="0.7" stop-color="#d53a2c"/><stop offset="1" stop-color="#bf3024"/></linearGradient>
<clipPath id="bc"><path d="M1463.5 735 V948 Q1466 1000 1520 1000 H1727 Q1781 1000 1783 948 V735 Z"/></clipPath>
<filter id="bl" x="-5%" y="-5%" width="110%" height="110%"><feGaussianBlur stdDeviation="0.9"/></filter>
<filter id="bl2" x="-5%" y="-5%" width="110%" height="110%"><feGaussianBlur stdDeviation="0.85"/></filter>
</defs>
<g filter="url(#bl)">
<path d="M1463.5 735 V948 Q1466 1000 1520 1000 H1727 Q1781 1000 1783 948 V735 Z" fill="url(#bd)"/>
<g clip-path="url(#bc)">
<path d="M1460 716 H1786 V793.5 Q1719 835 1628 849.6 Q1531 835 1460 793.5 Z" fill="#1b1a1c"/>
<path d="M1460 793.5 Q1531 835 1628 849.6 Q1719 835 1786 793.5" fill="none" stroke="#7b2233" stroke-width="6"/>
<path d="M1460 799 Q1531 840.5 1628 855 Q1719 840.5 1786 799" fill="none" stroke="#f3d9dc" stroke-width="2.5"/>
<path d="M1460 733 C1500 748 1560 752 1623 752 C1686 752 1746 748 1786 733 V746.5 C1746 761.5 1686 766 1623 766 C1560 766 1500 761.5 1460 746.5 Z" fill="#858585"/>
</g>
<path d="M1463.5 736 C1463.5 712 1480 700 1520 693 C1560 686 1600 684.4 1623 684.4 C1646 684.4 1686 686 1726 693 C1766 700 1783 712 1783 736 Q1783 740 1776 741.5 C1730 750 1670 752.5 1623 752.5 C1576 752.5 1516 750 1470 741.5 Q1463.5 740 1463.5 736 Z" fill="url(#sh)"/>
<ellipse cx="1623.2" cy="713" rx="146" ry="25" fill="#f7f7f7"/>
<ellipse cx="1612" cy="693" rx="74" ry="31" fill="#cf392b"/>
<ellipse cx="1607" cy="690" rx="62" ry="22" fill="#d9503f"/>
<path d="M1565.5 634 L1573.5 702 Q1624 748 1675 702 L1687 634 Z" fill="url(#rd)"/>
<ellipse cx="1626.2" cy="634" rx="60.8" ry="14.5" fill="#cc3a2d"/>
<ellipse cx="1626.2" cy="637" rx="52" ry="10" fill="#dc4a3b"/>
<path d="M1618 501 Q1618 497.5 1622 497.5 H1635 Q1639 497.5 1639 501 L1649 632 Q1627 642 1605 632 Z" fill="url(#rd)"/>
<path d="M1686 674 Q1694 676 1703 690" fill="none" stroke="#d1402f" stroke-width="6"/>
<path d="M1702.5 700 L1706.5 646 Q1707.5 635 1718 635 H1731 Q1741.5 635 1742.5 646 L1747.8 700 Q1725 718 1702.5 700 Z" fill="url(#rd)"/>
<circle cx="1629" cy="791.7" r="19.6" fill="#8d2b3c"/>
<rect x="1620" y="780" width="18" height="21" fill="#e9d9dc"/>
<text x="1629" y="798" font-size="19" font-weight="bold" text-anchor="middle" fill="#6d1f2e" font-family="'DejaVu Sans Condensed','DejaVu Sans','Liberation Sans',sans-serif">3</text>
<circle cx="1693.5" cy="874" r="27" fill="none" stroke="#e0e0dc" stroke-width="3"/>
<circle cx="1693.5" cy="874" r="15" fill="none" stroke="#e2e2de" stroke-width="3"/>
</g>
<g filter="url(#bl2)">
<text x="1553" y="763.5" font-size="11.5" font-weight="bold" fill="#c4c4c4" textLength="159" lengthAdjust="spacingAndGlyphs" font-family="'DejaVu Sans Condensed','DejaVu Sans','Liberation Sans',sans-serif">FABRICADO DESDE 1894</text>
<text x="1579.5" y="831" font-size="24.5" font-weight="bold" fill="#f2f2f2" textLength="101" lengthAdjust="spacingAndGlyphs" font-family="'DejaVu Sans Condensed','DejaVu Sans','Liberation Sans',sans-serif">3-EN-UNO.</text>
<text x="1564.5" y="931" font-size="46.6" font-weight="bold" fill="#1d1d1b" textLength="106.5" lengthAdjust="spacingAndGlyphs" font-family="'DejaVu Sans Condensed','DejaVu Sans','Liberation Sans',sans-serif">ACEITE</text>
<text x="1563.5" y="948.6" font-size="17.5" font-weight="bold" fill="#55554f" textLength="118" lengthAdjust="spacingAndGlyphs" font-family="'DejaVu Sans Condensed','DejaVu Sans','Liberation Sans',sans-serif">Usos Múltiples</text>
<rect x="1564.5" y="951.8" width="120.5" height="2" fill="#8b8b86"/>
<text x="1564" y="968.5" font-size="11.5" fill="#c56577" textLength="52" lengthAdjust="spacingAndGlyphs" font-family="'DejaVu Sans Condensed','DejaVu Sans','Liberation Sans',sans-serif">• Lubrica</text>
<text x="1564" y="980.7" font-size="11.5" fill="#c56577" textLength="49" lengthAdjust="spacingAndGlyphs" font-family="'DejaVu Sans Condensed','DejaVu Sans','Liberation Sans',sans-serif">• Limpia</text>
<text x="1564" y="992.8" font-size="11.5" fill="#c56577" textLength="121" lengthAdjust="spacingAndGlyphs" font-family="'DejaVu Sans Condensed','DejaVu Sans','Liberation Sans',sans-serif">• Previene el óxido</text>
<text x="1704" y="968" font-size="10" fill="#b3b3ae" textLength="29" lengthAdjust="spacingAndGlyphs" font-family="'DejaVu Sans Condensed','DejaVu Sans','Liberation Sans',sans-serif">CONT.</text>
<text x="1706" y="980" font-size="10" fill="#b3b3ae" textLength="27" lengthAdjust="spacingAndGlyphs" font-family="'DejaVu Sans Condensed','DejaVu Sans','Liberation Sans',sans-serif">NETO</text>
<text x="1707" y="992" font-size="10" fill="#b3b3ae" textLength="26" lengthAdjust="spacingAndGlyphs" font-family="'DejaVu Sans Condensed','DejaVu Sans','Liberation Sans',sans-serif">30ml</text>
<text transform="translate(1551 990.5) rotate(-90)" x="0" y="0" font-size="40" font-weight="bold" fill="#55554f" textLength="135.5" lengthAdjust="spacingAndGlyphs" font-family="'DejaVu Sans Condensed','DejaVu Sans','Liberation Sans',sans-serif">Larga Duración</text>
</g>
</svg>
<div style="left:103px;top:1100.8px;width:2623px;height:2.4px;background:#707070;"></div>
<div style="left:104px;top:1025.2px;width:347.8px;height:75.8px;background:#f0f0f0;border:2.4px solid #a8a8a8;border-bottom:none;border-left:none;"></div>
<div style="left:186.4px;top:1025.2px;width:3.3px;height:75.8px;background:#a8a8a8;"></div>
<div style="left:274.2px;top:1025.2px;width:3.3px;height:75.8px;background:#a8a8a8;"></div>
<div style="left:362.5px;top:1025.2px;width:3.1px;height:75.8px;background:#a8a8a8;"></div>
<div style="left:7.8px;top:1021.3px;width:96.2px;height:82.1px;background:#f8f8f8;border:2px solid #1a1a9a;border-bottom:none;"></div>
<svg style="left:0px;top:1010px;" width="470" height="110" viewBox="0 1010 470 110"><path d="M80.02 1056.84 V1034.98 H34.16 V1087.1 H52.31" fill="none" stroke="#7a7a7a" stroke-width="4"/><rect x="38.06" y="1041.23" width="7.81" height="3.9" fill="#4d82b8" /><rect x="48.41" y="1041.23" width="11.13" height="3.9" fill="#4d82b8" /><rect x="64.41" y="1041.23" width="7.42" height="3.9" fill="#4d82b8" /><rect x="38.06" y="1049.04" width="7.81" height="3.9" fill="#4d82b8" /><rect x="48.41" y="1049.04" width="11.13" height="3.9" fill="#4d82b8" /><rect x="64.41" y="1049.04" width="7.42" height="3.9" fill="#4d82b8" /><rect x="38.06" y="1056.84" width="7.81" height="3.9" fill="#4d82b8" /><rect x="48.41" y="1056.84" width="5.27" height="3.9" fill="#4d82b8" /><rect x="38.06" y="1065.04" width="7.81" height="3.51" fill="#4d82b8" /><rect x="48.41" y="1065.04" width="5.27" height="3.51" fill="#4d82b8" /><rect x="38.06" y="1072.85" width="7.81" height="3.9" fill="#4d82b8" /><rect x="48.41" y="1072.85" width="5.27" height="3.9" fill="#4d82b8" /><rect x="56.21" y="1061.14" width="31.62" height="3.9" fill="#737373" /><rect x="56.21" y="1068.55" width="31.62" height="24.4" fill="#737373" /><rect x="72.22" y="1072.85" width="11.71" height="3.9" fill="#d9d9d9" /><path d="M119.06 1032.06 H156.15 L166.88 1042.21 V1089.63 H119.06 Z" fill="#fff" stroke="#8b8b8b" stroke-width="2.2"/><path d="M156.15 1032.06 V1042.21 H166.88" fill="none" stroke="#8b8b8b" stroke-width="1.6"/><circle cx="137.6" cy="1047.08" r="7.2" fill="#4d82b8"/><circle cx="152.24" cy="1047.08" r="7.2" fill="#4d82b8"/><circle cx="137.6" cy="1061.72" r="7.2" fill="#4d82b8"/><circle cx="152.24" cy="1061.72" r="7.2" fill="#4d82b8"/><path d="M152.24 1047.08 V1039.28 H160.44 V1047.08 Z" fill="#fff"/><path d="M152.24 1047.08 L152.24 1040.84 A6 6 0 0 1 158.1 1047.08 Z" fill="#4d82b8"/><rect x="120.23" y="1071.48" width="45.67" height="17.18" fill="#4d82b8" /><text x="143.07" y="1086.51" font-size="18.5" text-anchor="middle" fill="#fff" font-family="'Liberation Sans','DejaVu Sans',sans-serif">SAT</text><rect x="219.97" y="1034.98" width="22.06" height="5.86" fill="#efc26e" /><rect x="219.97" y="1042.01" width="22.06" height="14.83" fill="#efc26e" /><rect x="236.17" y="1045.13" width="3.9" height="3.9" fill="#fff" /><path d="M230.9 1056.84 V1070.9 M210.8 1070.9 V1063.48 H251.4 V1070.9" fill="none" stroke="#8b8b8b" stroke-width="2"/><rect x="201.62" y="1071.09" width="18.35" height="3.9" fill="#efc26e" /><rect x="201.62" y="1076.17" width="18.35" height="12.88" fill="#efc26e" /><rect x="214.12" y="1078.31" width="3.9" height="2.34" fill="#fff" /><rect x="221.92" y="1071.09" width="18.15" height="3.9" fill="#efc26e" /><rect x="221.92" y="1076.17" width="18.15" height="12.88" fill="#efc26e" /><rect x="234.22" y="1078.31" width="3.9" height="2.34" fill="#fff" /><rect x="242.03" y="1071.09" width="18.15" height="3.9" fill="#efc26e" /><rect x="242.03" y="1076.17" width="18.15" height="12.88" fill="#efc26e" /><rect x="254.32" y="1078.31" width="3.9" height="2.34" fill="#fff" /><rect x="296.09" y="1040.84" width="47.82" height="10.15" fill="#efc26e" /><rect x="296.09" y="1053.33" width="47.82" height="31.81" fill="#efc26e" /><rect x="313.85" y="1056.84" width="11.71" height="5.86" fill="#fff" /><path d="M324.0 1090.61 V1070.9 M316.59 1078.31 L324.0 1070.12 L331.42 1078.31" fill="none" stroke="#4d82c0" stroke-width="4"/><path d="M340.01 1068.55 V1089.05 M332.59 1081.83 L340.01 1090.02 L347.43 1081.83" fill="none" stroke="#8b8b8b" stroke-width="4"/><g fill="none" stroke="#9c9c9c" stroke-width="2.2"><circle cx="406.96" cy="1061.72" r="28"/><ellipse cx="406.96" cy="1061.72" rx="13" ry="28"/><path d="M406.96 1033.72 V1089.72 M378.96 1061.72 H434.96 M382.46 1048.22 H431.46 M382.46 1075.22 H431.46"/></g><rect x="395.83" y="1073.04" width="44.11" height="21.86" fill="#6fa58f" /><text x="417.89" y="1090.42" font-size="22" font-weight="bold" text-anchor="middle" fill="#fff" font-family="'Liberation Sans','DejaVu Sans',sans-serif">eco</text></svg>
<div style="left:16px;top:1110px;width:632px;height:512px;background:#f8f8f8;border:2px solid #d4d4d4;"></div>
<div style="left:16px;top:1110px;width:632px;height:43px;background:#e6e6e6;border:2px solid #d4d4d4;"></div>
<span class="t" style="top:1120px;font-size:22px;font-weight:bold;letter-spacing:0.45px;left:40px;">Almacén</span>
<div style="left:656.5px;top:1110px;width:301.5px;height:512px;background:#f8f8f8;border:2px solid #d4d4d4;"></div>
<div style="left:656.5px;top:1110px;width:301.5px;height:43px;background:#e6e6e6;border:2px solid #d4d4d4;"></div>
<span class="t" style="top:1120px;font-size:22px;font-weight:bold;letter-spacing:0.15px;left:680px;">Dimensiones</span>
<div style="left:966.5px;top:1110px;width:1272.5px;height:512px;background:#f8f8f8;border:2px solid #d4d4d4;"></div>
<div style="left:966.5px;top:1110px;width:1272.5px;height:43px;background:#e6e6e6;border:2px solid #d4d4d4;"></div>
<span class="t" style="top:1120px;font-size:22px;font-weight:bold;letter-spacing:0.33px;left:989px;">Características</span>
<span class="t" style="top:1185px;font-size:22px;color:#9c9caa;letter-spacing:-0.13px;left:39px;">Clave de Talla</span>
<div style="left:244px;top:1175px;width:379.5px;height:39.5px;background:#f8f8f8;border:2px solid #a4a4a4;"></div>
<svg style="left:602px;top:1193.25px;" width="11" height="6" viewBox="0 0 11 6"><path d="M0 0 H11 L5.5 6 Z" fill="#c4c4c4" /></svg>
<span class="t" style="top:1233px;font-size:22px;color:#9c9caa;letter-spacing:-0.18px;left:39px;">Máscara Talla</span>
<div style="left:244px;top:1223px;width:379.5px;height:39.5px;background:#f8f8f8;border:2px solid #a4a4a4;"></div>
<svg style="left:602px;top:1241.25px;" width="11" height="6" viewBox="0 0 11 6"><path d="M0 0 H11 L5.5 6 Z" fill="#c4c4c4" /></svg>
<span class="t" style="top:1281px;font-size:22px;letter-spacing:-0.7px;left:39px;">Unidad  Almacén</span>
<div style="left:244px;top:1271px;width:173.5px;height:39.5px;background:#f5f5f5;border:2px solid #d2d2d2;"></div>
<svg style="left:396px;top:1289.25px;" width="11" height="6" viewBox="0 0 11 6"><path d="M0 0 H11 L5.5 6 Z" fill="#c4c4c4" /></svg>
<span class="t" style="top:1281px;font-size:22px;color:#50505a;letter-spacing:0.21px;left:251.3px;">PIEZA</span>
<span class="t" style="top:1329px;font-size:22px;letter-spacing:-0.39px;left:39px;">Unidad Conversión</span>
<div style="left:244px;top:1319px;width:173.5px;height:39.5px;background:#ffffff;border:2px solid #a4a4a4;"></div>
<svg style="left:396px;top:1337.25px;" width="11" height="6" viewBox="0 0 11 6"><path d="M0 0 H11 L5.5 6 Z" fill="#6e6e6e" /></svg>
<span class="t" style="top:1329px;font-size:22px;color:#45454f;letter-spacing:0.21px;left:251.3px;">PIEZA</span>
<span class="t" style="top:1329px;font-size:22px;letter-spacing:0.17px;left:425px;">Factor: 1.0000</span>
<span class="t" style="top:1377px;font-size:22px;letter-spacing:-0.57px;left:39px;">Unidad  Consumo</span>
<div style="left:244px;top:1367px;width:173.5px;height:39.5px;background:#ffffff;border:2px solid #a4a4a4;"></div>
<svg style="left:396px;top:1385.25px;" width="11" height="6" viewBox="0 0 11 6"><path d="M0 0 H11 L5.5 6 Z" fill="#6e6e6e" /></svg>
<span class="t" style="top:1377px;font-size:22px;color:#45454f;letter-spacing:0.21px;left:251.3px;">PIEZA</span>
<span class="t" style="top:1377px;font-size:22px;letter-spacing:0.17px;left:425px;">Factor: 1.0000</span>
<span class="t" style="top:1425px;font-size:22px;letter-spacing:-0.69px;left:39px;">Familia</span>
<div style="left:244px;top:1415px;width:379.5px;height:39.5px;background:#ffffff;border:2px solid #a4a4a4;"></div>
<svg style="left:602px;top:1433.25px;" width="11" height="6" viewBox="0 0 11 6"><path d="M0 0 H11 L5.5 6 Z" fill="#6e6e6e" /></svg>
<span class="t" style="top:1425px;font-size:22px;color:#45454f;letter-spacing:0.36px;left:251.3px;">COMERCIALIZACION</span>
<span class="t" style="top:1473px;font-size:22px;letter-spacing:-0.46px;left:39px;">Departamento</span>
<div style="left:244px;top:1463px;width:379.5px;height:39.5px;background:#ffffff;border:2px solid #a4a4a4;"></div>
<svg style="left:602px;top:1481.25px;" width="11" height="6" viewBox="0 0 11 6"><path d="M0 0 H11 L5.5 6 Z" fill="#6e6e6e" /></svg>
<span class="t" style="top:1473px;font-size:22px;color:#45454f;letter-spacing:0.36px;left:251.3px;">COMERCIALIZACION</span>
<span class="t" style="top:1521px;font-size:22px;letter-spacing:-0.18px;left:39px;">Tipo de Costeo</span>
<div style="left:244px;top:1511px;width:379.5px;height:39.5px;background:#ffffff;border:2px solid #a4a4a4;"></div>
<svg style="left:602px;top:1529.25px;" width="11" height="6" viewBox="0 0 11 6"><path d="M0 0 H11 L5.5 6 Z" fill="#6e6e6e" /></svg>
<span class="t" style="top:1521px;font-size:22px;color:#45454f;letter-spacing:-0.59px;left:251.3px;">Promedio</span>
<span class="t" style="top:1569px;font-size:22px;letter-spacing:-0.03px;left:39px;">Proveedor</span>
<div style="left:244px;top:1559px;width:379.5px;height:39.5px;background:#ffffff;border:2px solid #a4a4a4;"></div>
<svg style="left:602px;top:1577.25px;" width="11" height="6" viewBox="0 0 11 6"><path d="M0 0 H11 L5.5 6 Z" fill="#6e6e6e" /></svg>
<span class="t" style="top:1185px;font-size:22px;letter-spacing:-0.35px;left:679px;">Alto</span>
<div style="left:790px;top:1175px;width:143.5px;height:39.5px;background:#ffffff;border:2px solid #a4a4a4;"></div>
<span class="t" style="top:1185px;font-size:22px;color:#45454f;letter-spacing:-0.29px;left:857.5px;">0.0000</span>
<span class="t" style="top:1233px;font-size:22px;letter-spacing:-0.33px;left:679px;">Ancho</span>
<div style="left:790px;top:1223px;width:143.5px;height:39.5px;background:#ffffff;border:2px solid #a4a4a4;"></div>
<span class="t" style="top:1233px;font-size:22px;color:#45454f;letter-spacing:-0.29px;left:857.5px;">0.0000</span>
<span class="t" style="top:1281px;font-size:22px;letter-spacing:0.06px;left:679px;">Peso</span>
<div style="left:790px;top:1271px;width:143.5px;height:39.5px;background:#ffffff;border:2px solid #a4a4a4;"></div>
<span class="t" style="top:1281px;font-size:22px;color:#45454f;letter-spacing:-0.29px;left:857.5px;">0.0000</span>
<span class="t" style="top:1329px;font-size:22px;letter-spacing:-0.86px;left:679px;">Volumen</span>
<div style="left:790px;top:1319px;width:143.5px;height:39.5px;background:#ffffff;border:2px solid #a4a4a4;"></div>
<span class="t" style="top:1329px;font-size:22px;color:#45454f;letter-spacing:-0.29px;left:857.5px;">0.0000</span>
<span class="t" style="top:1377px;font-size:22px;letter-spacing:-0.24px;left:679px;">Emp. Ext.</span>
<div style="left:790px;top:1367px;width:143.5px;height:39.5px;background:#ffffff;border:2px solid #a4a4a4;"></div>
<span class="t" style="top:1377px;font-size:22px;color:#45454f;letter-spacing:-0.29px;left:857.5px;">1.0000</span>
<span class="t" style="top:1425px;font-size:22px;letter-spacing:-0.09px;left:679px;">Emp. Int.</span>
<div style="left:790px;top:1415px;width:143.5px;height:39.5px;background:#ffffff;border:2px solid #a4a4a4;"></div>
<span class="t" style="top:1425px;font-size:22px;color:#45454f;letter-spacing:-0.29px;left:857.5px;">1.0000</span>
<span class="t" style="top:1473px;font-size:22px;letter-spacing:-0.63px;left:679px;">Densidad</span>
<div style="left:790px;top:1463px;width:143.5px;height:39.5px;background:#ffffff;border:2px solid #a4a4a4;"></div>
<span class="t" style="top:1473px;font-size:22px;color:#45454f;letter-spacing:-0.29px;left:857.5px;">0.0000</span>
<span class="t" style="top:1185px;font-size:22px;letter-spacing:0.27px;left:989px;">MARCA</span>
<div style="left:1194px;top:1175px;width:396.5px;height:39.5px;background:#ffffff;border:2px solid #a4a4a4;"></div>
<svg style="left:1569px;top:1193.25px;" width="11" height="6" viewBox="0 0 11 6"><path d="M0 0 H11 L5.5 6 Z" fill="#6e6e6e" /></svg>
<span class="t" style="top:1185px;font-size:22px;color:#45454f;letter-spacing:-0.57px;left:1201.3px;">WD40</span>
<span class="t" style="top:1185px;font-size:22px;letter-spacing:-0.54px;left:1598.5px;">lciCaracteristica10</span>
<div style="left:1803px;top:1175px;width:412px;height:39.5px;background:#ffffff;border:2px solid #a4a4a4;"></div>
<svg style="left:2193.5px;top:1193.25px;" width="11" height="6" viewBox="0 0 11 6"><path d="M0 0 H11 L5.5 6 Z" fill="#6e6e6e" /></svg>
<span class="t" style="top:1233px;font-size:22px;letter-spacing:-0.29px;left:989px;">MODELO</span>
<div style="left:1194px;top:1223px;width:396.5px;height:39.5px;background:#ffffff;border:2px solid #a4a4a4;"></div>
<svg style="left:1569px;top:1241.25px;" width="11" height="6" viewBox="0 0 11 6"><path d="M0 0 H11 L5.5 6 Z" fill="#6e6e6e" /></svg>
<span class="t" style="top:1233px;font-size:22px;color:#45454f;letter-spacing:0.3px;left:1201.3px;">ACCESORIOS</span>
<span class="t" style="top:1233px;font-size:22px;letter-spacing:-0.54px;left:1598.5px;">lciCaracteristica11</span>
<div style="left:1803px;top:1223px;width:412px;height:39.5px;background:#ffffff;border:2px solid #a4a4a4;"></div>
<svg style="left:2193.5px;top:1241.25px;" width="11" height="6" viewBox="0 0 11 6"><path d="M0 0 H11 L5.5 6 Z" fill="#6e6e6e" /></svg>
<span class="t" style="top:1281px;font-size:22px;letter-spacing:0.12px;left:989px;">USO</span>
<div style="left:1194px;top:1271px;width:396.5px;height:39.5px;background:#ffffff;border:2px solid #a4a4a4;"></div>
<svg style="left:1569px;top:1289.25px;" width="11" height="6" viewBox="0 0 11 6"><path d="M0 0 H11 L5.5 6 Z" fill="#6e6e6e" /></svg>
<span class="t" style="top:1281px;font-size:22px;color:#45454f;letter-spacing:0.72px;left:1201.3px;">AFLOJATODO</span>
<span class="t" style="top:1281px;font-size:22px;letter-spacing:-0.54px;left:1598.5px;">lciCaracteristica12</span>
<div style="left:1803px;top:1271px;width:412px;height:39.5px;background:#ffffff;border:2px solid #a4a4a4;"></div>
<svg style="left:2193.5px;top:1289.25px;" width="11" height="6" viewBox="0 0 11 6"><path d="M0 0 H11 L5.5 6 Z" fill="#6e6e6e" /></svg>
<span class="t" style="top:1329px;font-size:22px;letter-spacing:0.64px;left:989px;">TIPO</span>
<div style="left:1194px;top:1319px;width:396.5px;height:39.5px;background:#ffffff;border:2px solid #a4a4a4;"></div>
<svg style="left:1569px;top:1337.25px;" width="11" height="6" viewBox="0 0 11 6"><path d="M0 0 H11 L5.5 6 Z" fill="#6e6e6e" /></svg>
<span class="t" style="top:1329px;font-size:22px;letter-spacing:-0.54px;left:1598.5px;">lciCaracteristica13</span>
<div style="left:1803px;top:1319px;width:412px;height:39.5px;background:#ffffff;border:2px solid #a4a4a4;"></div>
<svg style="left:2193.5px;top:1337.25px;" width="11" height="6" viewBox="0 0 11 6"><path d="M0 0 H11 L5.5 6 Z" fill="#6e6e6e" /></svg>
<span class="t" style="top:1377px;font-size:22px;letter-spacing:0.06px;left:989px;">LINEA</span>
<div style="left:1194px;top:1367px;width:396.5px;height:39.5px;background:#ffffff;border:2px solid #a4a4a4;"></div>
<svg style="left:1569px;top:1385.25px;" width="11" height="6" viewBox="0 0 11 6"><path d="M0 0 H11 L5.5 6 Z" fill="#6e6e6e" /></svg>
<span class="t" style="top:1377px;font-size:22px;letter-spacing:-0.54px;left:1598.5px;">lciCaracteristica14</span>
<div style="left:1803px;top:1367px;width:412px;height:39.5px;background:#ffffff;border:2px solid #a4a4a4;"></div>
<svg style="left:2193.5px;top:1385.25px;" width="11" height="6" viewBox="0 0 11 6"><path d="M0 0 H11 L5.5 6 Z" fill="#6e6e6e" /></svg>
<span class="t" style="top:1425px;font-size:22px;letter-spacing:0.63px;left:989px;">CALIFICACION</span>
<div style="left:1194px;top:1415px;width:396.5px;height:39.5px;background:#ffffff;border:2px solid #a4a4a4;"></div>
<svg style="left:1569px;top:1433.25px;" width="11" height="6" viewBox="0 0 11 6"><path d="M0 0 H11 L5.5 6 Z" fill="#6e6e6e" /></svg>
<span class="t" style="top:1425px;font-size:22px;letter-spacing:-0.54px;left:1598.5px;">lciCaracteristica15</span>
<div style="left:1803px;top:1415px;width:412px;height:39.5px;background:#ffffff;border:2px solid #a4a4a4;"></div>
<svg style="left:2193.5px;top:1433.25px;" width="11" height="6" viewBox="0 0 11 6"><path d="M0 0 H11 L5.5 6 Z" fill="#6e6e6e" /></svg>
<span class="t" style="top:1473px;font-size:22px;letter-spacing:-0.46px;left:989px;">lciCaracteristica7</span>
<div style="left:1194px;top:1463px;width:396.5px;height:39.5px;background:#ffffff;border:2px solid #a4a4a4;"></div>
<svg style="left:1569px;top:1481.25px;" width="11" height="6" viewBox="0 0 11 6"><path d="M0 0 H11 L5.5 6 Z" fill="#6e6e6e" /></svg>
<span class="t" style="top:1473px;font-size:22px;letter-spacing:-0.54px;left:1598.5px;">lciCaracteristica16</span>
<div style="left:1803px;top:1463px;width:412px;height:39.5px;background:#ffffff;border:2px solid #a4a4a4;"></div>
<svg style="left:2193.5px;top:1481.25px;" width="11" height="6" viewBox="0 0 11 6"><path d="M0 0 H11 L5.5 6 Z" fill="#6e6e6e" /></svg>
<span class="t" style="top:1521px;font-size:22px;letter-spacing:-0.54px;left:989px;">lciCaracteristica8</span>
<div style="left:1194px;top:1511px;width:396.5px;height:39.5px;background:#ffffff;border:2px solid #a4a4a4;"></div>
<svg style="left:1569px;top:1529.25px;" width="11" height="6" viewBox="0 0 11 6"><path d="M0 0 H11 L5.5 6 Z" fill="#6e6e6e" /></svg>
<span class="t" style="top:1521px;font-size:22px;letter-spacing:-0.54px;left:1598.5px;">lciCaracteristica17</span>
<div style="left:1803px;top:1511px;width:412px;height:39.5px;background:#ffffff;border:2px solid #a4a4a4;"></div>
<svg style="left:2193.5px;top:1529.25px;" width="11" height="6" viewBox="0 0 11 6"><path d="M0 0 H11 L5.5 6 Z" fill="#6e6e6e" /></svg>
<span class="t" style="top:1569px;font-size:22px;letter-spacing:-0.54px;left:989px;">lciCaracteristica9</span>
<div style="left:1194px;top:1559px;width:396.5px;height:39.5px;background:#ffffff;border:2px solid #a4a4a4;"></div>
<svg style="left:1569px;top:1577.25px;" width="11" height="6" viewBox="0 0 11 6"><path d="M0 0 H11 L5.5 6 Z" fill="#6e6e6e" /></svg>
<span class="t" style="top:1569px;font-size:22px;letter-spacing:-0.54px;left:1598.5px;">lciCaracteristica18</span>
<div style="left:1803px;top:1559px;width:412px;height:39.5px;background:#ffffff;border:2px solid #a4a4a4;"></div>
<svg style="left:2193.5px;top:1577.25px;" width="11" height="6" viewBox="0 0 11 6"><path d="M0 0 H11 L5.5 6 Z" fill="#6e6e6e" /></svg>
</body></html>
